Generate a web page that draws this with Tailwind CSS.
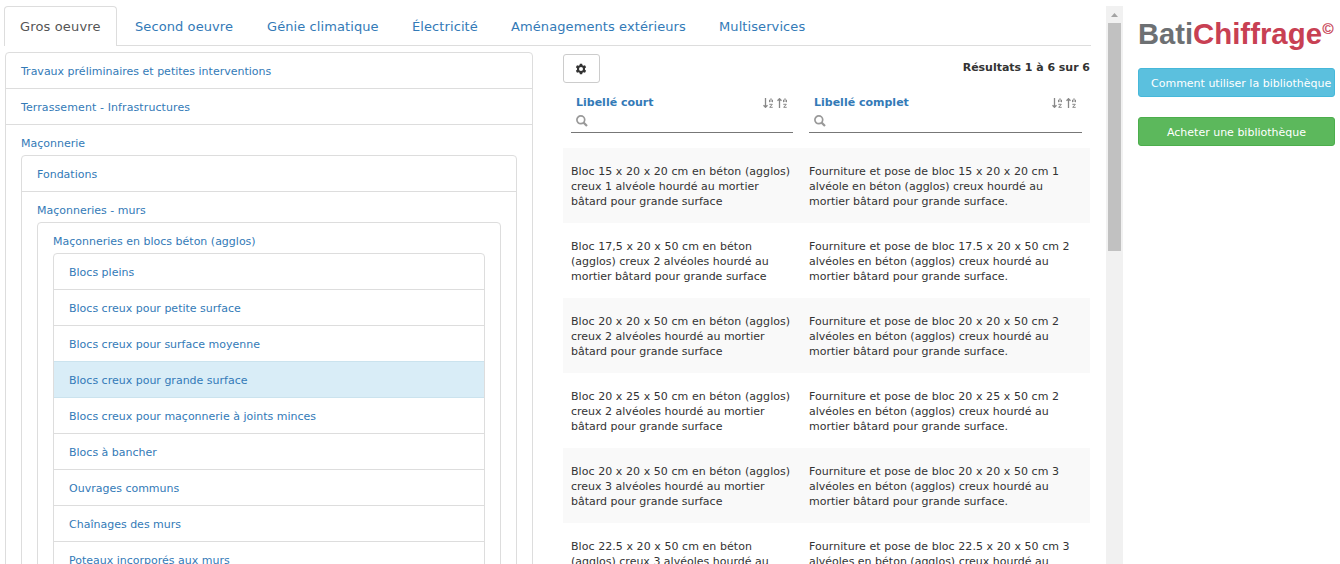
<!DOCTYPE html>
<html lang="fr">
<head>
<meta charset="utf-8">
<title>BatiChiffrage</title>
<script src="https://cdn.jsdelivr.net/npm/@tailwindcss/browser@4"></script>
</head>
<body class="h-[564px] w-[1340px] overflow-hidden bg-white font-['Verdana','DejaVu_Sans',sans-serif] text-[11px] leading-[15px] text-[#333]">
<svg class="hidden">
  <symbol id="search" viewBox="0 0 12 12"><circle cx="4.8" cy="4.8" r="3.9" fill="none" stroke="#999" stroke-width="1.700"/><path d="M7.600 7.600L11 11" stroke="#999" stroke-width="2.200"/></symbol>
  <symbol id="az" viewBox="0 0 4 10"><path d="M.5 4.200V2L2 .7 3.500 2v2.200M.5 3h3M.3 6.300h3L.7 9.300h3" fill="none" stroke="#888" stroke-width="1"/></symbol>
  <symbol id="down" viewBox="0 0 5 10"><path d="M2.500 0v9M.5 7.300l2 2 2-2" fill="none" stroke="#888" stroke-width="1.300"/></symbol>
  <symbol id="up" viewBox="0 0 5 10"><path d="M2.500 10V1M.5 2.700l2-2 2 2" fill="none" stroke="#888" stroke-width="1.300"/></symbol>
</svg>
<div class="flex h-full overflow-hidden">
  <main class="w-[1087px] ml-1 shrink-0 pt-1.5">
    <nav class="flex h-10 gap-0.5 border-b border-[#ddd] text-[13px] leading-[18px] tracking-[0.09px] text-[#337ab7] whitespace-nowrap">
      <a class="h-10 w-[113px] rounded-t border border-b-0 border-[#ddd] bg-white pl-[15px] pt-[11px] tracking-[0.15px] text-[#555]">Gros oeuvre</a>
      <a class="w-[130px] pl-4 pt-3">Second oeuvre</a>
      <a class="w-[143px] pl-4 pt-3">Génie climatique</a>
      <a class="w-[97px] pl-4 pt-3">Électricité</a>
      <a class="w-[206px] pl-4 pt-3">Aménagements extérieurs</a>
      <a class="pl-4 pt-3">Multiservices</a>
    </nav>
    <div class="flex">
      <section class="mt-1.5 ml-px h-[600px] w-[528px] rounded border border-[#ddd] text-[#337ab7]">
        <div class="h-9 border-b border-[#ddd] pl-[15px] pt-[11px]">Travaux préliminaires et petites interventions</div>
        <div class="h-9 border-b border-[#ddd] pl-[15px] pt-[11px] tracking-[0.1px]">Terrassement - Infrastructures</div>
        <div class="px-[15px] pt-[11px]">Maçonnerie
          <div class="mt-[4px] h-[500px] rounded border border-[#ddd]">
            <div class="h-9 border-b border-[#ddd] pl-[15px] pt-[11px]">Fondations</div>
            <div class="px-[15px] pt-[11px]">Maçonneries - murs
              <div class="mt-[4px] h-[500px] rounded border border-[#ddd] px-[15px] pt-[11px]">Maçonneries en blocs béton (agglos)
                <div class="mt-[4px] rounded border border-[#ddd]">
                  <div class="h-9 border-b border-[#ddd] pl-[15px] pt-[11px]">Blocs pleins</div>
                  <div class="h-9 border-b border-[#ddd] pl-[15px] pt-[11px]">Blocs creux pour petite surface</div>
                  <div class="h-[35px] pl-[15px] pt-[11px]">Blocs creux pour surface moyenne</div>
                  <div class="h-[37px] border-y border-[#cbe3ee] bg-[#d9edf7] pl-[15px] pt-[11px]">Blocs creux pour grande surface</div>
                  <div class="h-9 border-b border-[#ddd] pl-[15px] pt-[11px]">Blocs creux pour maçonnerie à joints minces</div>
                  <div class="h-9 border-b border-[#ddd] pl-[15px] pt-[11px]">Blocs à bancher</div>
                  <div class="h-9 border-b border-[#ddd] pl-[15px] pt-[11px]">Ouvrages communs</div>
                  <div class="h-9 border-b border-[#ddd] pl-[15px] pt-[11px]">Chaînages des murs</div>
                  <div class="h-9 pl-[15px] pt-[11px]">Poteaux incorporés aux murs</div>
                </div>
              </div>
            </div>
          </div>
        </div>
      </section>
      <section class="ml-[30px] w-[527px] pt-2">
        <div class="flex h-[29px] justify-between">
          <button class="flex w-[37px] items-center justify-center rounded-[3px] border border-[#ccc] bg-white pr-px pt-px">
            <svg class="size-3" viewBox="0 0 12 12"><path fill="#333" fill-rule="evenodd" d="M4.900.8h2.200l.4 1.500 1 .5 1.500-.5 1.100 1.900-1.100 1.100v1.400l1.100 1.100L10 9.700l-1.500-.5-1 .5-.4 1.500H4.900l-.4-1.500-1-.5-1.500.5L.9 7.800 2 6.700V5.300L.9 4.200 2 2.300l1.500.5 1-.5zM6 4a2 2 0 100 4 2 2 0 000-4z"/></svg>
          </button>
          <strong class="pt-[6px] tracking-[-0.03px]">Résultats 1 à 6 sur 6</strong>
        </div>
        <div class="flex gap-4 px-2 pt-[5px]">
          <div class="h-[45px] w-[222px] border-b border-[#777] px-1.5 pt-[7px]">
            <div class="flex items-center justify-between text-[#337ab7]"><strong class="-ml-px pt-px leading-[14px]">Libellé court</strong>
              <span class="flex h-2.5 gap-[1px]"><svg class="h-2.5 w-[5px]"><use href="#down"/></svg><svg class="h-2.5 w-1"><use href="#az"/></svg><svg class="ml-[3px] h-2.5 w-[5px]"><use href="#up"/></svg><svg class="h-2.5 w-1"><use href="#az"/></svg></span></div>
            <svg class="mt-[5px] -ml-px size-3"><use href="#search"/></svg>
          </div>
          <div class="h-[45px] w-[273px] border-b border-[#777] px-1.5 pt-[7px]">
            <div class="flex items-center justify-between text-[#337ab7]"><strong class="-ml-px pt-px leading-[14px]">Libellé complet</strong>
              <span class="flex h-2.5 gap-[1px]"><svg class="h-2.5 w-[5px]"><use href="#down"/></svg><svg class="h-2.5 w-1"><use href="#az"/></svg><svg class="ml-[3px] h-2.5 w-[5px]"><use href="#up"/></svg><svg class="h-2.5 w-1"><use href="#az"/></svg></span></div>
            <svg class="mt-[5px] -ml-px size-3"><use href="#search"/></svg>
          </div>
        </div>
        <div class="mt-[15px] whitespace-nowrap">
          <div class="flex h-[75px] gap-4 bg-[#f9f9f9] px-2 pt-4 first-line:tracking-[0.05px]"><p class="w-[222px] first-line:tracking-[0.06px]">Bloc 15 x 20 x 20 cm en béton (agglos)<br>creux 1 alvéole hourdé au mortier<br>bâtard pour grande surface</p><p class="first-line:tracking-[0.06px]">Fourniture et pose de bloc 15 x 20 x 20 cm 1<br>alvéole en béton (agglos) creux hourdé au<br>mortier bâtard pour grande surface.</p></div>
          <div class="flex h-[75px] gap-4 px-2 pt-4"><p class="w-[222px] first-line:tracking-[0.06px]">Bloc 17,5 x 20 x 50 cm en béton<br>(agglos) creux 2 alvéoles hourdé au<br>mortier bâtard pour grande surface</p><p class="first-line:tracking-[0.06px]">Fourniture et pose de bloc 17.5 x 20 x 50 cm 2<br>alvéoles en béton (agglos) creux hourdé au<br>mortier bâtard pour grande surface.</p></div>
          <div class="flex h-[75px] gap-4 bg-[#f9f9f9] px-2 pt-4"><p class="w-[222px] first-line:tracking-[0.06px]">Bloc 20 x 20 x 50 cm en béton (agglos)<br>creux 2 alvéoles hourdé au mortier<br>bâtard pour grande surface</p><p class="first-line:tracking-[0.06px]">Fourniture et pose de bloc 20 x 20 x 50 cm 2<br>alvéoles en béton (agglos) creux hourdé au<br>mortier bâtard pour grande surface.</p></div>
          <div class="flex h-[75px] gap-4 px-2 pt-4"><p class="w-[222px] first-line:tracking-[0.06px]">Bloc 20 x 25 x 50 cm en béton (agglos)<br>creux 2 alvéoles hourdé au mortier<br>bâtard pour grande surface</p><p class="first-line:tracking-[0.06px]">Fourniture et pose de bloc 20 x 25 x 50 cm 2<br>alvéoles en béton (agglos) creux hourdé au<br>mortier bâtard pour grande surface.</p></div>
          <div class="flex h-[75px] gap-4 bg-[#f9f9f9] px-2 pt-4"><p class="w-[222px] first-line:tracking-[0.06px]">Bloc 20 x 20 x 50 cm en béton (agglos)<br>creux 3 alvéoles hourdé au mortier<br>bâtard pour grande surface</p><p class="first-line:tracking-[0.06px]">Fourniture et pose de bloc 20 x 20 x 50 cm 3<br>alvéoles en béton (agglos) creux hourdé au<br>mortier bâtard pour grande surface.</p></div>
          <div class="flex h-[75px] gap-4 px-2 pt-4"><p class="w-[222px] first-line:tracking-[0.06px]">Bloc 22.5 x 20 x 50 cm en béton<br>(agglos) creux 3 alvéoles hourdé au<br>mortier bâtard pour grande surface</p><p class="first-line:tracking-[0.06px]">Fourniture et pose de bloc 22.5 x 20 x 50 cm 3<br>alvéoles en béton (agglos) creux hourdé au<br>mortier bâtard pour grande surface.</p></div>
        </div>
      </section>
    </div>
  </main>
  <div class="mt-1.5 ml-[15px] flex w-[17px] shrink-0 flex-col items-center bg-[#f1f1f1]">
    <svg class="h-[17px] w-[17px] shrink-0" viewBox="0 0 17 17"><path d="M5 11h7L8.500 7z" fill="#a3a3a3"/></svg>
    <div class="h-[228px] w-[13px] shrink-0 bg-[#c1c1c1]"></div>
  </div>
  <aside class="ml-[15px] w-[197px] shrink-0 whitespace-nowrap text-white">
    <svg class="block h-[68px] w-[197px]" viewBox="0 0 197 68" font-family="Liberation Sans" font-weight="700"><text x="0" y="43.500" font-size="30" fill="#6d7073" textLength="55" lengthAdjust="spacingAndGlyphs">Bati</text><text x="55" y="43.500" font-size="30" fill="#c84053" textLength="129" lengthAdjust="spacingAndGlyphs">Chiffrage</text><text x="184.500" y="33.500" font-size="15" font-weight="400" fill="#c84053" stroke="#c84053" stroke-width=".3">©</text></svg>
    <a class="block h-[29px] rounded-[3px] border border-[#46b8da] bg-[#5bc0de] pl-3 pt-[7px]">Comment utiliser la bibliothèque</a>
    <a class="mt-5 block h-[29px] rounded-[3px] border border-[#4cae4c] bg-[#5cb85c] pt-[7px] text-center">Acheter une bibliothèque</a>
  </aside>
</div>
</body>
</html>
